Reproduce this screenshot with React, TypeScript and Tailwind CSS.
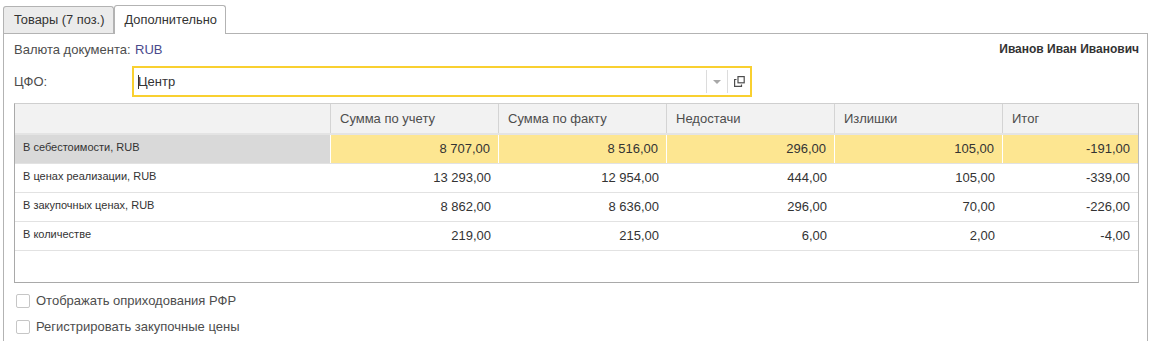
const rows = [
  { name: "В себестоимости, RUB", vals: ["8 707,00", "8 516,00", "296,00", "105,00", "-191,00"], selected: true },
  { name: "В ценах реализации, RUB", vals: ["13 293,00", "12 954,00", "444,00", "105,00", "-339,00"] },
  { name: "В закупочных ценах, RUB", vals: ["8 862,00", "8 636,00", "296,00", "70,00", "-226,00"] },
  { name: "В количестве", vals: ["219,00", "215,00", "6,00", "2,00", "-4,00"] },
];

const headers = ["Сумма по учету", "Сумма по факту", "Недостачи", "Излишки", "Итог"];

const cols = "grid grid-cols-[316px_168px_168px_168px_168px_1fr]";

function Checkbox({ label }: { label: string }) {
  return (
    <div className="flex items-center h-[26px]">
      <div className="w-[14px] h-[14px] ml-[2px] border border-[#c6c6c6] rounded-[2px] bg-white" />
      <span className="ml-[6px]">{label}</span>
    </div>
  );
}

export default function App() {
  return (
    <div className="w-[1153px] h-[341px] overflow-hidden bg-white pt-[5px] pl-[3px] font-['Liberation_Sans',Arial,sans-serif] text-[13px] text-[#4d4d4d]">
      <div className="flex items-end h-[28px] text-[12.85px]">
        <div className="h-[27px] pl-[10px] pr-[9px] flex items-center border border-b-0 border-[#b3b3b3] rounded-t-[3px] bg-[#ebebeb] text-[#333]">
          Товары (7 поз.)
        </div>
        <div className="relative z-10 -mb-px h-[29px] pl-[9px] pr-[8px] flex items-center border border-b-0 border-[#b3b3b3] rounded-t-[3px] bg-white text-[#333]">
          Дополнительно
        </div>
      </div>
      <div className="w-[1145px] h-[320px] border border-b-0 border-[#b3b3b3] pl-[10px] pr-[8px]">
        <div className="flex items-center justify-between h-[18px] mt-[7px]">
          <div className="flex">
            <span className="w-[121px]">Валюта документа:</span>
            <span className="text-[#4a4a8c]">RUB</span>
          </div>
          <span className="font-bold text-[12px] text-[#333] -mt-[3px]">Иванов Иван Иванович</span>
        </div>
        <div className="flex items-center mt-[7px]">
          <span className="w-[118px]">ЦФО:</span>
          <div className="w-[620px] h-[31px] border-2 border-[#f9d030] flex items-center">
            <span className="flex-1 pl-[4px] text-[#333]">
              <span className="inline-block w-px h-[14px] bg-[#333] align-middle -mr-px" />
              Центр
            </span>
            <div className="w-px h-[23px] bg-[#dcdcdc]" />
            <div className="w-[20px] flex justify-center">
              <div className="w-0 h-0 border-l-[4px] border-r-[4px] border-t-[4px] border-l-transparent border-r-transparent border-t-[#a8a8a8]" />
            </div>
            <div className="w-px h-[23px] bg-[#dcdcdc]" />
            <div className="w-[22px] flex justify-center">
              <svg width="11" height="11" viewBox="0 0 11 11" fill="none" stroke="#4d4d4d" strokeWidth="1.2">
                <rect x="4" y="0.6" width="6.2" height="6.2" />
                <path d="M2.5 3.5H0.6V10.4H7.5V8.5" />
              </svg>
            </div>
          </div>
        </div>
        <div className="mt-[6px] w-[1125px] h-[180px] border border-[#a9a9a9] border-t-[#cfcfcf] border-r-[#bdbdbd] text-[11px] text-[#333]">
          <div className={`${cols} h-[31px] bg-[#f2f2f2] border-b-2 border-[#e4e4e4] text-[#4d4d4d]`}>
            <div className="border-r border-[#d4d4d4]" />
            {headers.map((h, i) => (
              <div key={h} className={`flex items-center pl-[9px] text-[13px] ${i < 4 ? "border-r border-[#d4d4d4]" : ""}`}>
                {h}
              </div>
            ))}
          </div>
          {rows.map((r) => (
            <div key={r.name} className={`${cols} h-[29px] border-b border-[#e2e2e2]`}>
              <div className={`flex items-center pl-[8px] pb-[3px] ${r.selected ? "bg-[#d9d9d9] border-r border-white" : ""}`}>
                {r.name}
              </div>
              {r.vals.map((v, i) => (
                <div
                  key={i}
                  className={`flex items-center justify-end pr-[8px] text-[13px] ${
                    r.selected ? `bg-[#fde691] ${i < 4 ? "border-r border-white" : ""}` : ""
                  }`}
                >
                  {v}
                </div>
              ))}
            </div>
          ))}
        </div>
        <div className="mt-[5px]">
          <Checkbox label="Отображать оприходования РФР" />
          <Checkbox label="Регистрировать закупочные цены" />
        </div>
      </div>
    </div>
  );
}
